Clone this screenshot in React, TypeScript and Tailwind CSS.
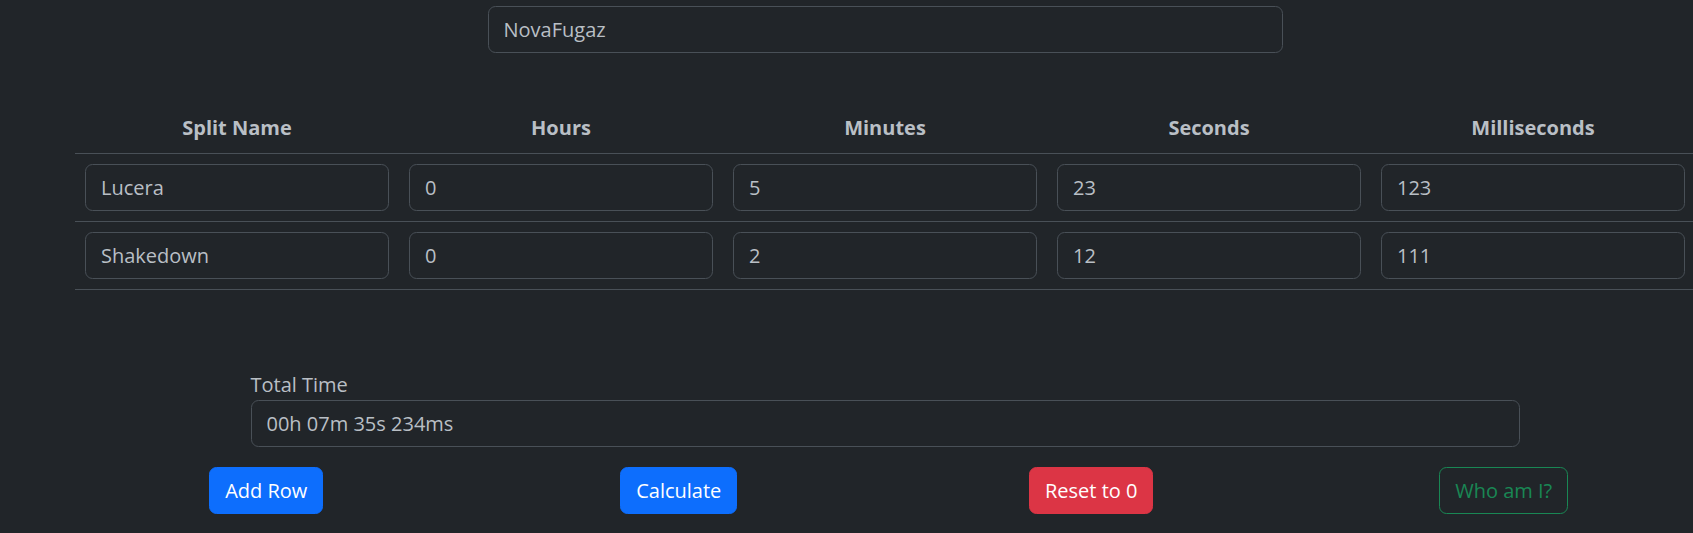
import { useState } from "react";

interface Split {
  id: number;
  name: string;
  hours: string;
  minutes: string;
  seconds: string;
  ms: string;
}

const initialSplits: Split[] = [
  { id: 1, name: "Lucera", hours: "0", minutes: "5", seconds: "23", ms: "123" },
  { id: 2, name: "Shakedown", hours: "0", minutes: "2", seconds: "12", ms: "111" },
];

const headers = ["Split Name", "Hours", "Minutes", "Seconds", "Milliseconds"];

const inputClass =
  "block w-full h-[47px] px-[15px] py-[7.5px] text-[20px] leading-[30px] text-[#b9bfc5] bg-[#212529] border border-[#495057] rounded-[7.5px] outline-none";

export default function App() {
  const [splits] = useState<Split[]>(initialSplits);

  return (
    <div
      className="w-[1693px] h-[533px] overflow-hidden bg-[#212529] text-[#b9bfc5]"
      style={{ fontFamily: '"Open Sans", "Noto Sans", sans-serif' }}
    >
      <div className="ml-[60px] w-[1650px]">
        {/* Runner name */}
        <div className="pt-[6px]">
          <input className={`${inputClass} mx-auto !w-[795px]`} value="NovaFugaz" readOnly />
        </div>

        {/* Splits table */}
        <div className="px-[15px] mt-[50px]">
          <table className="w-full table-fixed border-collapse">
            <thead>
              <tr>
                {headers.map((h) => (
                  <th
                    key={h}
                    className="p-[10px] text-[20px] leading-[30px] font-bold text-center border-b border-[#495057]"
                  >
                    {h}
                  </th>
                ))}
              </tr>
            </thead>
            <tbody>
              {splits.map((s) => (
                <tr key={s.id}>
                  {[s.name, s.hours, s.minutes, s.seconds, s.ms].map((v, i) => (
                    <td key={i} className="p-[10px] border-b border-[#495057]">
                      <input className={inputClass} value={v} readOnly />
                    </td>
                  ))}
                </tr>
              ))}
            </tbody>
          </table>
        </div>

        {/* Total */}
        <div className="w-[1269px] mx-auto mt-[80px]">
          <label className="block text-[20px] leading-[30px]">Total Time</label>
          <input className={inputClass} value="00h 07m 35s 234ms" readOnly />
        </div>

        {/* Actions */}
        <div className="grid grid-cols-4 justify-items-center mt-[20px]">
          <button className="h-[47px] px-[15px] text-[20px] leading-[30px] text-white bg-[#0d6efd] border border-[#0d6efd] rounded-[7.5px]">
            Add Row
          </button>
          <button className="h-[47px] px-[15px] text-[20px] leading-[30px] text-white bg-[#0d6efd] border border-[#0d6efd] rounded-[7.5px]">
            Calculate
          </button>
          <button className="h-[47px] px-[15px] text-[20px] leading-[30px] text-white bg-[#dc3545] border border-[#dc3545] rounded-[7.5px]">
            Reset to 0
          </button>
          <button className="h-[47px] px-[15px] text-[20px] leading-[30px] text-[#198754] bg-transparent border border-[#198754] rounded-[7.5px]">
            Who am I?
          </button>
        </div>
      </div>
    </div>
  );
}
